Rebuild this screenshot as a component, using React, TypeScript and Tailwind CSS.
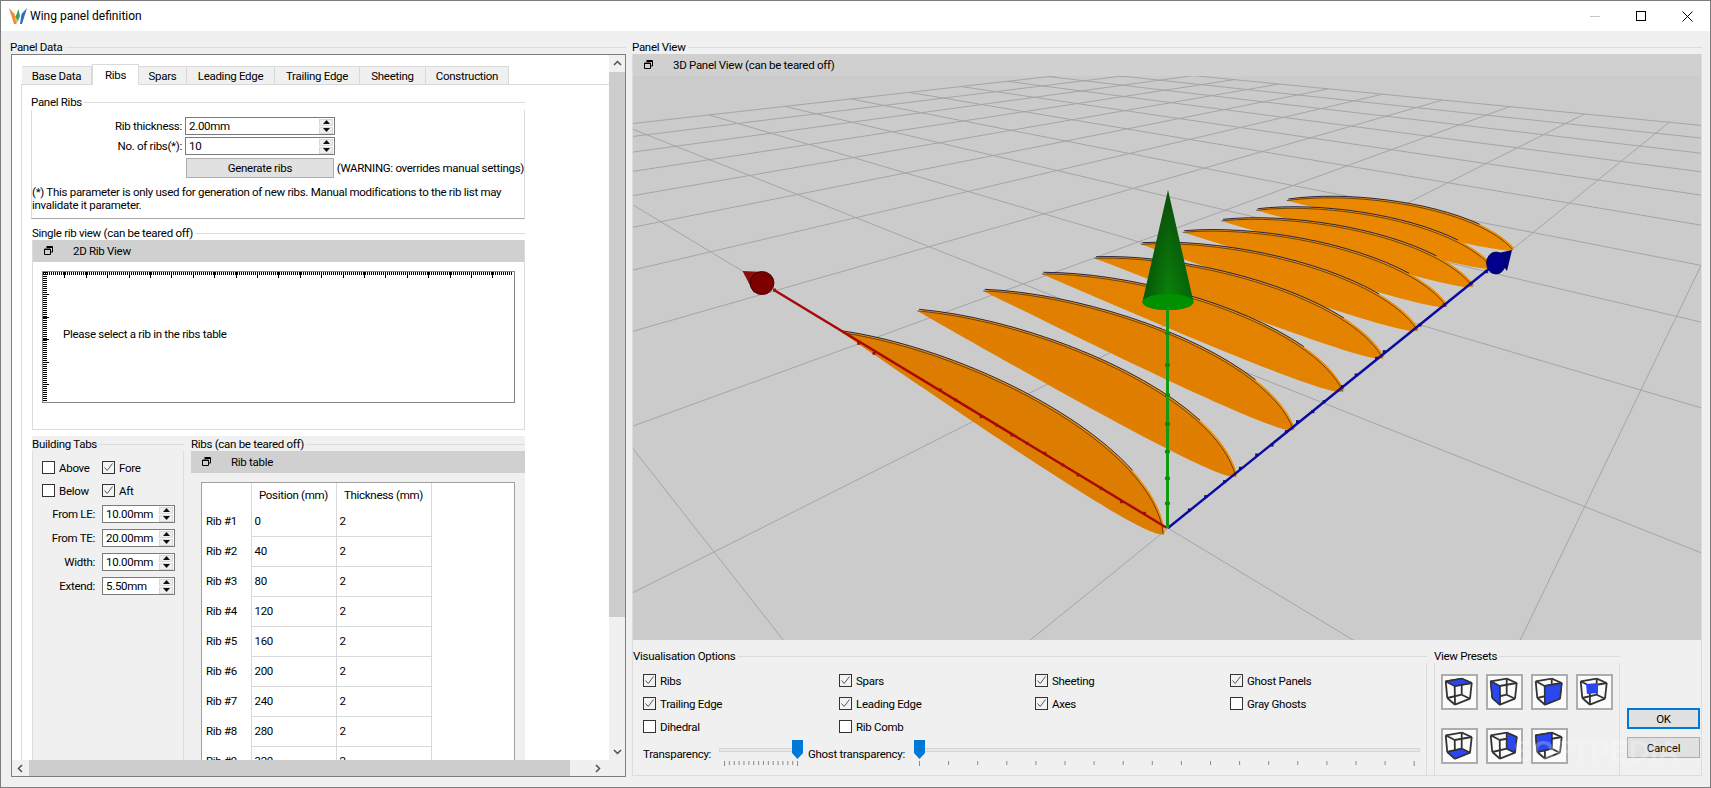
import React from "react";

type P = [number, number];
const VPr: P = [268, -15];
const VPb: P = [1834, -12];
const Pb = (j: number): P => {
  const x = 1834 - 1 / (0.001499 + j * 0.000453);
  return [x, -12 + (1834 - x) * (540 / 667)];
};
const Pr = (k: number): P => {
  const x = 268 + 1 / (0.001112 + k * 0.000288);
  return [x, -15 + (x - 268) * (543 / 899)];
};
const meet = (a: P, b: P, c: P, d: P): P => {
  const a1 = b[1] - a[1], b1 = a[0] - b[0], c1 = a1 * a[0] + b1 * a[1];
  const a2 = d[1] - c[1], b2 = c[0] - d[0], c2 = a2 * c[0] + b2 * c[1];
  const det = a1 * b2 - a2 * b1;
  return [(c1 * b2 - c2 * b1) / det, (a1 * c2 - a2 * c1) / det];
};
const ids = Array.from({ length: 14 }, (_, i) => i - 3);
const gridLines: [P, P][] = [
  ...ids.map((j): [P, P] => {
    const s = meet(VPr, Pb(j), VPb, Pr(10));
    return [s, [s[0] + (s[0] - VPr[0]) * 12, s[1] + (s[1] - VPr[1]) * 12]];
  }),
  ...ids.map((k): [P, P] => {
    const s = meet(VPb, Pr(k), VPr, Pb(10));
    return [s, [s[0] + (s[0] - VPb[0]) * 12, s[1] + (s[1] - VPb[1]) * 12]];
  }),
];

const z = (x: number, y: number): P => [720 + x / 1.96, 170 + y / 3];
const fmt = (p: P) => `${p[0].toFixed(1)} ${p[1].toFixed(1)}`;

const ribData: [number, number, number, number, string][] = [
  [1112, 87, 1555, 235, "#ea8800"],
  [1052, 116, 1515, 290, "#e98700"],
  [984, 148, 1476, 345, "#e88600"],
  [908, 182, 1425, 405, "#e78500"],
  [826, 218, 1368, 477, "#e68400"],
  [735, 260, 1300, 560, "#e48300"],
  [632, 307, 1222, 660, "#e38200"],
  [517, 358, 1125, 775, "#e18000"],
  [388, 418, 1012, 915, "#df7e00"],
  [240, 483, 870, 1088, "#dc7c00"],
];
const ribPaths = ribData.map(([tx, ty, ex, ey, fill]) => {
  const cx = ex - tx, cy = ey - ty, nx = cy, ny = -cx;
  const at = (a: number, b: number) => z(tx + a * cx + b * nx, ty + a * cy + b * ny);
  const c1 = at(0.268, 0.16);
  const c2 = at(0.781, 0.2);
  const l1 = at(0.985, -0.035);
  const l2 = at(0.62, -0.028);
  const t = z(tx, ty), e = z(ex, ey);
  const top = `M${fmt(t)} C${fmt(c1)} ${fmt(c2)} ${fmt(e)}`;
  return { top, shape: `${top} C${fmt(l1)} ${fmt(l2)} ${fmt(t)} Z`, fill };
});

const redTicks: P[] = [[830,1030],[785,995],[745,955],[700,915],[670,885],[635,850],[600,820],[570,795],[540,765],[510,740],[460,690],[430,660],[300,550],[270,520],[105,360]];
const blueTicks: P[] = [[918,1020],[950,980],[987,935],[1018,895],[1050,855],[1080,825],[1108,785],[1130,755],[1160,725],[1182,695],[1218,650],[1245,615],[1285,565],[1300,545],[1370,465],[1418,405],[1470,340],[1500,305]];
const greenTicks: P[] = [[875,1000],[875,925],[875,845],[875,762],[875,675],[875,585],[875,490]];

function GLView() {
  return (
    <svg viewBox="632 76 1068 564" className="block w-full flex-1 bg-[#cbcbcb]" preserveAspectRatio="none">
      <defs>
        <linearGradient id="cone" x1="0" y1="0" x2="0" y2="1">
          <stop offset="0" stopColor="#0a4f0a" />
          <stop offset="1" stopColor="#0a8a0a" />
        </linearGradient>
        <linearGradient id="coneShade" x1="0" y1="0" x2="1" y2="0">
          <stop offset="0" stopColor="#003000" stopOpacity="0.55" />
          <stop offset="0.5" stopColor="#003000" stopOpacity="0" />
          <stop offset="1" stopColor="#003000" stopOpacity="0.4" />
        </linearGradient>
      </defs>
      {gridLines.map(([a, b], i) => (
        <line key={i} x1={a[0]} y1={a[1]} x2={b[0]} y2={b[1]} stroke="#a5a5a5" strokeWidth="1" />
      ))}
      {ribPaths.map((r, i) => (
        <g key={i}>
          <path d={r.shape} fill="#ef8d00" />
          <path d={r.shape} fill={r.fill} transform="translate(-1.6 1.6)" />
          <path d={r.top} fill="none" stroke="#141414" strokeWidth="0.6" transform="translate(-1.6 1.6)" />
          <path d={r.top} fill="none" stroke="#26264a" strokeWidth="1" pathLength={100} strokeDasharray="82 100" />
        </g>
      ))}
      <line x1="1166" y1="528" x2="773" y2="290" stroke="#a80808" strokeWidth="2.4" />
      {redTicks.map(([x, y], i) => { const p = z(x, y); return <rect key={i} x={p[0] - 1.5} y={p[1] - 1.5} width="3" height="3" fill="#9a1010" />; })}
      <path d="M741.5 271 L763 272 L753 293 Z" fill="#8f0a0a" />
      <ellipse cx="761" cy="283" rx="12" ry="11.5" fill="#7c0000" stroke="#2c0000" strokeWidth="0.8" />
      <line x1="1167" y1="528" x2="1494" y2="264" stroke="#0a0a9e" strokeWidth="2.4" />
      {blueTicks.map(([x, y], i) => { const p = z(x, y); return <rect key={i} x={p[0] - 1.5} y={p[1] - 1.5} width="3" height="3" fill="#0a0a8a" />; })}
      <path d="M1493 254 L1511 250 L1506 271 Z" fill="#00007a" />
      <ellipse cx="1495" cy="263" rx="9.5" ry="11" fill="#00008a" stroke="#00004a" strokeWidth="0.8" />
      <line x1="1166.5" y1="528" x2="1166.5" y2="308" stroke="#129a12" strokeWidth="3" />
      {greenTicks.map(([x, y], i) => { const p = z(x, y); return <rect key={i} x={p[0] - 2.5} y={p[1] - 1.5} width="5" height="3" fill="#0f8a0f" />; })}
      <path d="M1167 190 L1141.5 302 A25.5 8 0 0 0 1192.5 302 Z" fill="url(#cone)" />
      <path d="M1167 190 L1141.5 302 A25.5 8 0 0 0 1192.5 302 Z" fill="url(#coneShade)" />
      <ellipse cx="1167" cy="302" rx="25.5" ry="8" fill="#009000" />
    </svg>
  );
}

function FloatIcon() {
  return (
    <svg width="9" height="9" viewBox="0 0 9 9" className="block">
      <path d="M2.5 .5h6v5.5h-2M.5 3h6v5.5h-6zM.5 3.5h6M2.5 1.5h6" fill="none" stroke="#000" strokeWidth="1" />
    </svg>
  );
}

function DockBar({ title }: { title: string }) {
  return (
    <div className="flex items-center h-[22px] bg-[#d0d0d0] shrink-0">
      <div className="ml-[11px] w-[29px] -mt-[2px]"><FloatIcon /></div>
      <span>{title}</span>
    </div>
  );
}

function GroupLabel({ title }: { title: string }) {
  return (
    <div className="flex items-center h-4 shrink-0">
      <span className="whitespace-nowrap pr-[2px]">{title}</span>
      <div className="flex-1 h-px bg-[#dcdcdc]" />
    </div>
  );
}

function Stepper() {
  return (
    <div className="flex flex-col gap-px w-[14px] shrink-0">
      <div className="h-[7px] bg-[#eeeeee] border border-[#d8d8d8] flex items-center justify-center">
        <svg width="7" height="4" viewBox="0 0 7 4" className="block"><path d="M3.5 0L7 4H0z" fill="#111" /></svg>
      </div>
      <div className="h-[7px] bg-[#eeeeee] border border-[#d8d8d8] flex items-center justify-center">
        <svg width="7" height="4" viewBox="0 0 7 4" className="block"><path d="M3.5 4L7 0H0z" fill="#111" /></svg>
      </div>
    </div>
  );
}

function Spin({ value, w }: { value: string; w: string }) {
  return (
    <div className={`flex items-center h-[18px] border border-[#7a7a7a] bg-white pl-[3px] pr-px shrink-0 ${w}`}>
      <span className="flex-1 whitespace-nowrap">{value}</span>
      <Stepper />
    </div>
  );
}

function Check({ label, on, w }: { label: string; on?: boolean; w: string }) {
  return (
    <div className={`flex items-center gap-[4px] shrink-0 ${w}`}>
      <div className={`w-[13px] h-[13px] border border-[#333333] shrink-0 flex items-center justify-center ${on ? "bg-[#f3f3f3]" : "bg-white"}`}>
        {on && (
          <svg width="11" height="11" viewBox="0 0 11 11" className="block">
            <path d="M1.5 5.5L4.2 8.5L9.5 1.5" fill="none" stroke="#555" strokeWidth="1" />
          </svg>
        )}
      </div>
      <span className="whitespace-nowrap">{label}</span>
    </div>
  );
}

const cube: Record<string, P> = {
  A: [4.7, 7.3], B: [20.7, 4.7], C: [30.7, 9], D: [13.7, 12],
  E: [6.3, 24], F: [20.7, 20.7], G: [29, 24.7], H: [14, 30.7],
};
const edges = ["AB", "BC", "CD", "DA", "EF", "FG", "GH", "HE", "AE", "BF", "CG", "DH"];
const pts = (s: string) => s.split("").map((c) => cube[c].join(",")).join(" ");

function Preset({ face, inner }: { face?: string; inner?: boolean }) {
  return (
    <div className="w-[37px] h-[36px] bg-[#fbfbfb] border-2 border-[#adadad] shrink-0">
      <svg viewBox="2 2 33 32" width="33" height="32" className="block">
        {edges.map((e) => (
          <line key={e} x1={cube[e[0]][0]} y1={cube[e[0]][1]} x2={cube[e[1]][0]} y2={cube[e[1]][1]} stroke="#333" strokeWidth="1.8" />
        ))}
        {face && <polygon points={pts(face)} fill="#2a46f0" stroke="#333" strokeWidth="1.4" strokeLinejoin="round" />}
        {inner && <polygon points="10,10 22,9 22,19 11,20" fill="#2a46f0" />}
      </svg>
    </div>
  );
}

function Arrow({ d }: { d: string }) {
  return (
    <svg width="9" height="9" viewBox="0 0 9 9" className="block">
      <path d={d} fill="none" stroke="#505050" strokeWidth="1.5" />
    </svg>
  );
}

function Slider({ w, thumb, from, step, count }: { w: string; thumb: string; from: number; step: number; count: number }) {
  return (
    <div className={`relative h-[26px] shrink-0 ${w}`}>
      <div className="absolute left-0 right-0 top-[8px] h-[4px] bg-[#e7e7e7] border border-[#d6d6d6]" />
      <svg width="11" height="19" viewBox="0 0 11 19" className={`absolute top-0 ${thumb}`}>
        <path d="M0 0H11V13L5.5 19L0 13Z" fill="#0078d7" />
      </svg>
      <svg className="absolute left-0 top-[21px]" width="100%" height="5">
        {Array.from({ length: count }, (_, i) => (
          <line key={i} x1={from + i * step} x2={from + i * step} y1="0" y2={i === 0 || i === count - 1 ? 5 : 4} stroke="#8a8a8a" strokeWidth="1" />
        ))}
      </svg>
    </div>
  );
}

const tabs: [string, string][] = [
  ["Base Data", "w-[70px]"], ["Ribs", "w-[47px]"], ["Spars", "w-[48px]"], ["Leading Edge", "w-[88px]"],
  ["Trailing Edge", "w-[85px]"], ["Sheeting", "w-[66px]"], ["Construction", "w-[83px]"],
];
const rows = [0, 40, 80, 120, 160, 200, 240, 280, 320];

function Ruler() {
  const minorX = Array.from({ length: 235 }, (_, i) => i * 2);
  const minorY = Array.from({ length: 65 }, (_, i) => i * 2);
  const majorX = Array.from({ length: 22 }, (_, i) => Math.round((i + 1) * 21.4));
  const majorY = Array.from({ length: 6 }, (_, i) => Math.round((i + 1) * 22.4));
  return (
    <svg className="block" width="471" height="130" shapeRendering="crispEdges">
      {minorX.map((x) => <line key={x} x1={x + 0.5} x2={x + 0.5} y1="0" y2="3" stroke="#000" strokeWidth="1" />)}
      {minorY.map((y) => <line key={y} x1="0" x2="4" y1={y + 0.5} y2={y + 0.5} stroke="#000" strokeWidth="1" />)}
      {majorX.map((x) => <line key={x} x1={x + 0.5} x2={x + 0.5} y1="0" y2="6" stroke="#000" strokeWidth="1" />)}
      {majorY.map((y) => <line key={y} x1="0" x2="6" y1={y + 0.5} y2={y + 0.5} stroke="#000" strokeWidth="1" />)}
    </svg>
  );
}

export default function App() {
  return (
    <div className="relative w-[1711px] h-[788px] overflow-hidden flex flex-col bg-[#f0f0f0] border border-[#7c7c7c] text-[11.5px] tracking-tight leading-[16px] text-black font-['Roboto',sans-serif]">
      {/* title bar */}
      <div className="flex items-center h-[30px] bg-white shrink-0">
        <svg width="18" height="17" viewBox="0 0 18 17" className="ml-[8px] mr-[3px] block">
          <path d="M0 0 L5.5 6 L7.5 16 L5 16 Z" fill="#ef8b2c" />
          <path d="M5 5 L9 13 L7.5 16 Z" fill="#f2b15a" />
          <path d="M18 0 L12.5 6 L11 16 L13 16 Z" fill="#2a6cc8" />
          <path d="M9.5 1 L6.5 9 L9 13 L11 8 Z" fill="#36a26a" />
        </svg>
        <span className="flex-1 text-[12px] tracking-normal">Wing panel definition</span>
        <div className="w-[10px] h-px bg-[#c8c8c8] mr-[36px]" />
        <div className="w-[10px] h-[10px] border border-black mr-[36px]" />
        <svg width="11" height="11" viewBox="0 0 11 11" className="block mr-[17px]"><path d="M.5.5l10 10M10.5.5l-10 10" stroke="#000" strokeWidth="1" /></svg>
      </div>

      <div className="flex flex-1 pt-[8px] pl-[9px] min-h-0">
        {/* left column */}
        <div className="flex flex-col w-[616px] shrink-0">
          <GroupLabel title="Panel Data" />
          <div className="-mt-px ml-px h-[723px] border border-[#7d7d7d] bg-white flex flex-col">
            <div className="flex h-[705px]">
              <div className="flex flex-col w-[597px] h-full overflow-hidden pl-[9px]">
                <div className="flex items-end h-[20px] mt-[9px] pl-px shrink-0 relative z-10">
                  {tabs.map(([t, w]) =>
                    t === "Ribs" ? (
                      <div key={t} className={`${w} h-[21px] -mb-px bg-white border-x border-t border-[#d9d9d9] flex items-center justify-center`}>{t}</div>
                    ) : (
                      <div key={t} className={`${w} h-[18px] bg-[#f0f0f0] border border-b-0 border-l-0 border-[#d9d9d9] flex items-center justify-center`}>{t}</div>
                    )
                  )}
                </div>
                <div className="flex-1 min-h-0 border-l border-t border-[#d9d9d9] pl-[9px] pt-[9px] overflow-hidden">
                  <div className="w-[494px]">
                    <GroupLabel title="Panel Ribs" />
                    <div className="h-[109px] pt-[7px] border-x border-[#dcdcdc] border-b border-b-[#a8a8a8]">
                      <div className="flex items-center gap-[3px]">
                        <span className="w-[150px] text-right">Rib thickness:</span>
                        <Spin value="2.00mm" w="w-[150px]" />
                      </div>
                      <div className="flex items-center gap-[3px] mt-[2px]">
                        <span className="w-[150px] text-right">No. of ribs(*):</span>
                        <Spin value="10" w="w-[150px]" />
                      </div>
                      <div className="flex items-center mt-[3px] pl-[154px]">
                        <div className="w-[149px] h-[20px] bg-[#e1e1e1] border border-[#adadad] flex items-center justify-center">Generate ribs</div>
                        <span className="ml-[3px] whitespace-nowrap">(WARNING: overrides manual settings)</span>
                      </div>
                      <p className="leading-[13px] mt-[8px] whitespace-nowrap">(*) This parameter is only used for generation of new ribs. Manual modifications to the rib list may<br />invalidate it parameter.</p>
                    </div>

                    <div className="ml-px mt-[6px]">
                      <GroupLabel title="Single rib view (can be teared off)" />
                      <div className="-mt-px h-[190px] border-x border-b border-[#dcdcdc] flex flex-col">
                        <DockBar title="2D Rib View" />
                        <div className="ml-[9px] mt-[9px] w-[473px] h-[132px] border border-[#7f868c] relative">
                          <Ruler />
                          <span className="absolute left-[20px] top-[54px]">Please select a rib in the ribs table</span>
                        </div>
                      </div>
                    </div>

                    <div className="ml-px mt-[6px] flex gap-[7px] bg-[#f0f0f0] h-[330px] overflow-hidden">
                      <div className="w-[152px] shrink-0">
                        <GroupLabel title="Building Tabs" />
                        <div className="border-x border-[#dcdcdc] h-[320px] pl-[9px] pt-[10px] -mt-px">
                          <div className="flex h-[13px] items-center">
                            <Check label="Above" w="w-[60px]" /><Check label="Fore" on w="w-[60px]" />
                          </div>
                          <div className="flex h-[13px] items-center mt-[10px]">
                            <Check label="Below" w="w-[60px]" /><Check label="Aft" on w="w-[60px]" />
                          </div>
                          {[["From LE:", "10.00mm"], ["From TE:", "20.00mm"], ["Width:", "10.00mm"], ["Extend:", "5.50mm"]].map(([l, v], i) => (
                            <div key={l} className={`flex items-center ${i === 0 ? "mt-[8px]" : "mt-[6px]"}`}>
                              <span className="w-[53px] text-right mr-[7px]">{l}</span>
                              <Spin value={v} w="w-[73px]" />
                            </div>
                          ))}
                        </div>
                      </div>
                      <div className="flex-1">
                        <GroupLabel title="Ribs (can be teared off)" />
                        <div className="-mt-px">
                          <DockBar title="Rib table" />
                          <div className="ml-[10px] mt-[9px] w-[314px] h-[400px] border border-[#a0a0a0] bg-white">
                            <table className="table-fixed border-collapse w-[229px]">
                              <colgroup>
                                <col className="w-[49px]" /><col className="w-[85px]" /><col className="w-[95px]" />
                              </colgroup>
                              <thead>
                                <tr className="h-[23px]">
                                  <th className="font-normal p-0" />
                                  <th className="font-normal p-0 text-center border-l border-r border-[#d9d9d9]">Position (mm)</th>
                                  <th className="font-normal p-0 text-center border-r border-[#d9d9d9]">Thickness (mm)</th>
                                </tr>
                              </thead>
                              <tbody>
                                {rows.map((r, i) => (
                                  <tr key={r} className="h-[30px]">
                                    <td className="p-0 pl-[4px]">Rib #{i + 1}</td>
                                    <td className="p-0 pl-[3px] border border-[#d9d9d9] border-t-0">{r}</td>
                                    <td className="p-0 pl-[3px] border border-[#d9d9d9] border-t-0">2</td>
                                  </tr>
                                ))}
                              </tbody>
                            </table>
                          </div>
                        </div>
                      </div>
                    </div>
                  </div>
                </div>
              </div>
              {/* vertical scrollbar */}
              <div className="w-[16px] flex flex-col bg-[#f0f0f0] shrink-0">
                <div className="h-[17px] flex items-center justify-center"><Arrow d="M1 6l3.5-3.5L8 6" /></div>
                <div className="h-[545px] bg-[#cdcdcd]" />
                <div className="flex-1 flex items-end justify-center pb-[4px]"><Arrow d="M1 3l3.5 3.5L8 3" /></div>
              </div>
            </div>
            {/* horizontal scrollbar */}
            <div className="flex-1 flex items-center bg-[#f0f0f0]">
              <div className="w-[17px] flex justify-center"><Arrow d="M6 1L2.5 4.5L6 8" /></div>
              <div className="w-[541px] h-full bg-[#cdcdcd]" />
              <div className="flex-1 flex justify-center"><Arrow d="M3 1l3.5 3.5L3 8" /></div>
            </div>
          </div>
        </div>

        {/* right column */}
        <div className="flex flex-col w-[1070px] ml-[6px] shrink-0 h-[737px]">
          <GroupLabel title="Panel View" />
          <div className="-mt-px h-[722px] border-x border-b border-[#dcdcdc] flex flex-col">
            <DockBar title="3D Panel View (can be teared off)" />
            <div className="h-[564px] flex flex-col shrink-0"><GLView /></div>
            <div className="flex flex-1 mt-[8px]">
              <div className="w-[794px] flex flex-col shrink-0">
                <GroupLabel title="Visualisation Options" />
                <div className="flex-1 -mt-px border-r border-[#dcdcdc] pl-[10px] pt-[11px]">
                  <div className="flex items-center h-[13px]">
                    <Check label="Ribs" on w="w-[196px]" /><Check label="Spars" on w="w-[196px]" /><Check label="Sheeting" on w="w-[195px]" /><Check label="Ghost Panels" on w="w-[150px]" />
                  </div>
                  <div className="flex items-center h-[13px] mt-[10px]">
                    <Check label="Trailing Edge" on w="w-[196px]" /><Check label="Leading Edge" on w="w-[196px]" /><Check label="Axes" on w="w-[195px]" /><Check label="Gray Ghosts" w="w-[150px]" />
                  </div>
                  <div className="flex items-center h-[13px] mt-[10px]">
                    <Check label="Dihedral" w="w-[196px]" /><Check label="Rib Comb" w="w-[196px]" />
                  </div>
                  <div className="flex items-start mt-[7px]">
                    <span className="w-[76px] mt-[6px] whitespace-nowrap">Transparency:</span>
                    <Slider w="w-[84px]" thumb="left-[73px]" from={5.5} step={4.87} count={16} />
                    <span className="w-[106px] ml-[5px] mt-[6px] whitespace-nowrap">Ghost transparency:</span>
                    <Slider w="w-[506px]" thumb="left-0" from={5.5} step={29.1} count={18} />
                  </div>
                </div>
              </div>
              <div className="w-[186px] ml-[7px] flex flex-col shrink-0">
                <GroupLabel title="View Presets" />
                <div className="flex-1 -mt-px border-x border-[#dcdcdc] pl-[6px] pt-[11px]">
                  <div className="flex gap-[8px]">
                    <Preset face="ABCD" /><Preset face="ADHE" /><Preset face="DCGH" /><Preset inner />
                  </div>
                  <div className="flex gap-[8px] mt-[18px]">
                    <Preset face="EFGH" /><Preset face="BCGF" /><Preset face="ABFE" />
                  </div>
                </div>
              </div>
              <div className="ml-[7px] w-[73px] flex flex-col shrink-0 pt-[60px]">
                <div className="h-[21px] bg-[#e1e1e1] border-2 border-[#0078d7] flex items-center justify-center">OK</div>
                <div className="h-[21px] mt-[8px] bg-[#e1e1e1] border border-[#adadad] flex items-center justify-center">Cancel</div>
              </div>
            </div>
          </div>
        </div>
      </div>
      <span className="absolute left-[1512px] top-[732px] text-[29px] leading-[36px] tracking-normal font-bold text-white/25 font-['Liberation_Sans',sans-serif] whitespace-nowrap pointer-events-none">SOFTPEDIA</span>
    </div>
  );
}
